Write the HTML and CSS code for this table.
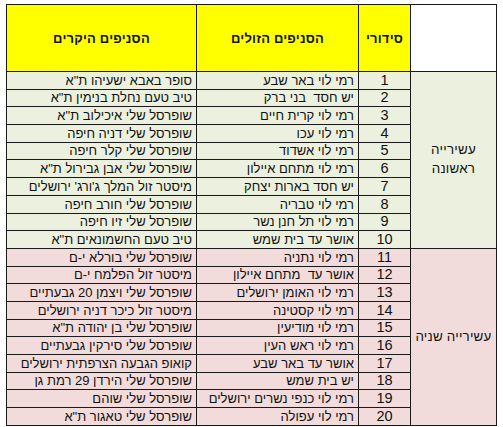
FILE: index.html
```html
<!DOCTYPE html>
<html lang="he" dir="rtl">
<head>
<meta charset="utf-8">
<link rel="stylesheet" href="styles.css">
</head>
<body>
<div class="wrap">
<table class="sheet">
  <colgroup>
    <col class="c-group"><col class="c-num"><col class="c-cheap"><col class="c-main">
  </colgroup>
  <thead>
    <tr class="head">
      <th class="blank"></th>
      <th class="yellow">סידורי</th>
      <th class="yellow">הסניפים הזולים</th>
      <th class="yellow">הסניפים היקרים</th>
    </tr>
  </thead>
  <tbody class="g1">
    <tr><td class="group" rowspan="10">עשירייה<br>ראשונה</td><td class="num">1</td><td>רמי לוי באר שבע</td><td>סופר באבא ישעיהו ת"א</td></tr>
    <tr><td class="num">2</td><td>יש חסד&nbsp; בני ברק</td><td>טיב טעם נחלת בנימין ת"א</td></tr>
    <tr><td class="num">3</td><td>רמי לוי קרית חיים</td><td>שופרסל שלי איכילוב ת"א</td></tr>
    <tr><td class="num">4</td><td>רמי לוי עכו</td><td>שופרסל שלי דניה חיפה</td></tr>
    <tr><td class="num">5</td><td>רמי לוי אשדוד</td><td>שופרסל שלי קלר חיפה</td></tr>
    <tr><td class="num">6</td><td>רמי לוי מתחם איילון</td><td>שופרסל שלי אבן גבירול ת"א</td></tr>
    <tr><td class="num">7</td><td>יש חסד בארות יצחק</td><td>מיסטר זול המלך ג'ורג' ירושלים</td></tr>
    <tr><td class="num">8</td><td>רמי לוי טבריה</td><td>שופרסל שלי חורב חיפה</td></tr>
    <tr><td class="num">9</td><td>רמי לוי תל חנן נשר</td><td>שופרסל שלי זיו חיפה</td></tr>
    <tr><td class="num">10</td><td>אושר עד בית שמש</td><td>טיב טעם החשמונאים ת"א</td></tr>
  </tbody>
  <tbody class="g2">
    <tr><td class="group" rowspan="10">עשירייה שניה</td><td class="num">11</td><td>רמי לוי נתניה</td><td>שופרסל שלי בורלא י-ם</td></tr>
    <tr><td class="num">12</td><td>אושר עד&nbsp; מתחם איילון</td><td>מיסטר זול הפלמח י-ם</td></tr>
    <tr><td class="num">13</td><td>רמי לוי האומן ירושלים</td><td>שופרסל שלי ויצמן 20 גבעתיים</td></tr>
    <tr><td class="num">14</td><td>רמי לוי קסטינה</td><td>מיסטר זול כיכר דניה ירושלים</td></tr>
    <tr><td class="num">15</td><td>רמי לוי מודיעין</td><td>שופרסל שלי בן יהודה ת"א</td></tr>
    <tr><td class="num">16</td><td>רמי לוי ראש העין</td><td>שופרסל שלי סירקין גבעתיים</td></tr>
    <tr><td class="num">17</td><td>אושר עד באר שבע</td><td>קואופ הגבעה הצרפתית ירושלים</td></tr>
    <tr><td class="num">18</td><td>יש בית שמש</td><td>שופרסל שלי הירדן 29 רמת גן</td></tr>
    <tr><td class="num">19</td><td>רמי לוי כנפי נשרים ירושלים</td><td>שופרסל שלי שוהם</td></tr>
    <tr><td class="num">20</td><td>רמי לוי עפולה</td><td>שופרסל שלי טאגור ת"א</td></tr>
  </tbody>
</table>
</div>
</body>
</html>
```

FILE: styles.css
```css
html, body {
  margin: 0;
  padding: 0;
  background: #ffffff;
}
.wrap {
  padding: 4px 6px 0 7px;
}
.sheet {
  border-collapse: collapse;
  table-layout: fixed;
  width: 490px;
  font-family: "Liberation Sans", Arial, sans-serif;
  font-size: 13px;
  color: #111;
  border: 1.5px solid #000;
}
.c-group { width: 86px; }
.c-num { width: 52px; }
.c-cheap { width: 162px; }
.c-main { width: 190px; }
.sheet th, .sheet td {
  border: 1px solid #1a1a1a;
  padding: 0 4px;
  white-space: nowrap;
  overflow: hidden;
  line-height: 15px;
}
.head { height: 67px; }
.head th {
  font-weight: bold;
  text-align: center;
  vertical-align: middle;
  letter-spacing: 0.2px;
}
.yellow { background: #ffff00; }
.blank { background: #ffffff; }
.sheet tbody tr { height: 17.7px; }
.sheet tbody td {
  text-align: right;
  vertical-align: bottom;
  padding-bottom: 1px;
}
.sheet tbody td.num {
  text-align: center;
  font-size: 14.5px;
}
.sheet tbody td.group {
  text-align: center;
  vertical-align: middle;
  line-height: 19px;
  font-size: 13.4px;
  letter-spacing: 0.2px;
}
.g1 td { background: #ebf1de; }
.g2 td { background: #f2dcdb; }
```
